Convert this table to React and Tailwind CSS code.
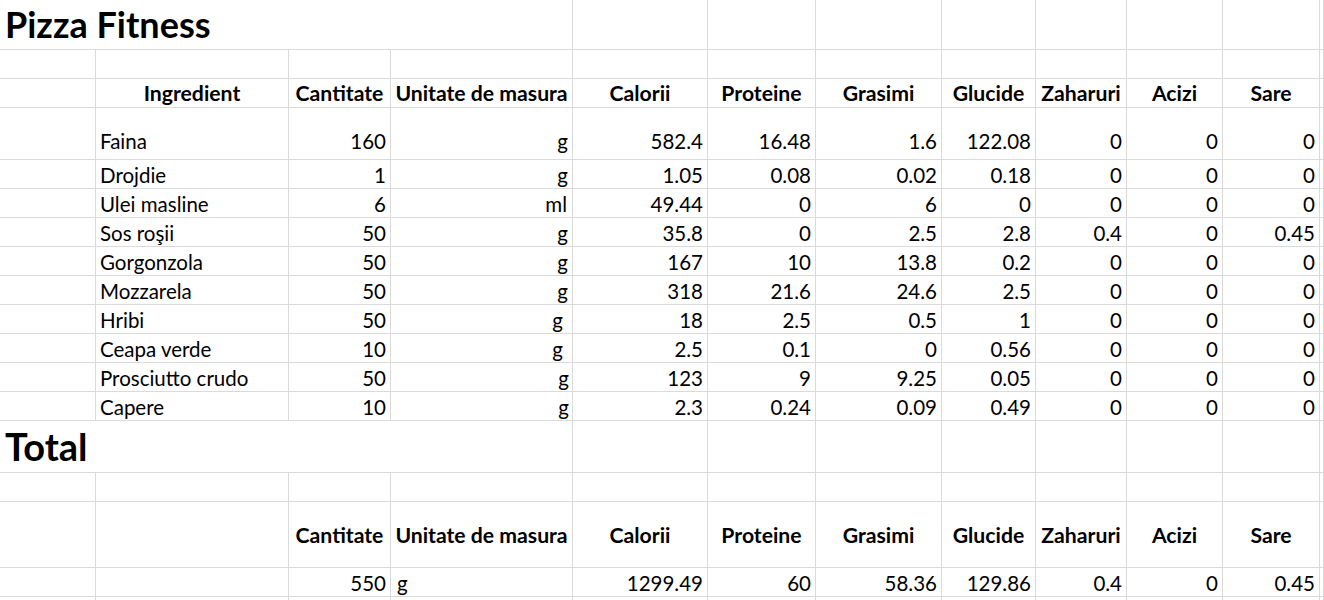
import React from "react";

const COLS = "grid-cols-[96px_193px_102px_182px_135px_108px_126px_94px_91px_96px_97px_1fr]";
const line = "border-[#dadada]";

function Cell({ children, className = "", span = "" }) {
  return (
    <div className={`border-r border-b ${line} flex items-end whitespace-nowrap overflow-visible ${span} ${className}`}>
      {children}
    </div>
  );
}

function Row({ h, children }) {
  return <div className={`grid ${COLS} ${h}`}>{children}</div>;
}

const headers = ["Calorii", "Proteine", "Grasimi", "Glucide", "Zaharuri", "Acizi", "Sare"];

const data = [
  ["Faina", "160", "g", "582.4", "16.48", "1.6", "122.08", "0", "0", "0", "pr-[4px]"],
  ["Drojdie", "1", "g", "1.05", "0.08", "0.02", "0.18", "0", "0", "0", "pr-[4px]"],
  ["Ulei masline", "6", "ml", "49.44", "0", "6", "0", "0", "0", "0", "pr-[4px]"],
  ["Sos roşii", "50", "g", "35.8", "0", "2.5", "2.8", "0.4", "0", "0.45", "pr-[4px]"],
  ["Gorgonzola", "50", "g", "167", "10", "13.8", "0.2", "0", "0", "0", "pr-[4px]"],
  ["Mozzarela", "50", "g", "318", "21.6", "24.6", "2.5", "0", "0", "0", "pr-[4px]"],
  ["Hribi", "50", "g", "18", "2.5", "0.5", "1", "0", "0", "0", "pr-[9px]"],
  ["Ceapa verde", "10", "g", "2.5", "0.1", "0", "0.56", "0", "0", "0", "pr-[9px]"],
  ["Prosciutto crudo", "50", "g", "123", "9", "9.25", "0.05", "0", "0", "0", "pr-[3px]"],
  ["Capere", "10", "g", "2.3", "0.24", "0.09", "0.49", "0", "0", "0", "pr-[3px]"],
];

function EmptyCells({ n, start = 0 }) {
  return Array.from({ length: n }).map((_, i) => <Cell key={start + i} />);
}

export default function App() {
  return (
    <div className="w-[1324px] h-[600px] overflow-hidden bg-white text-black font-['Lato',sans-serif] text-[20.5px] leading-none">
      {/* Title row */}
      <Row h="h-[50px]">
        <Cell span="col-span-4" className="pb-[7px] pl-[5px]">
          <span className="text-[36px] font-bold">Pizza Fitness</span>
        </Cell>
        <EmptyCells n={8} />
      </Row>
      {/* empty */}
      <Row h="h-[29px]">
        <EmptyCells n={12} />
      </Row>
      {/* header */}
      <Row h="h-[29px]">
        <Cell />
        <Cell className="justify-center pb-[3px] font-bold text-[21.2px]">Ingredient</Cell>
        <Cell className="justify-center pb-[3px] font-bold text-[21.2px]">Cantitate</Cell>
        <Cell className="justify-center pb-[3px] font-bold text-[21.2px]">Unitate de masura</Cell>
        {headers.map((h) => (
          <Cell key={h} className="justify-center pb-[3px] font-bold text-[21.2px]">{h}</Cell>
        ))}
        <Cell />
      </Row>
      {data.map((r, i) => (
        <Row key={r[0]} h={i === 0 ? "h-[52px]" : "h-[29px]"}>
          <Cell />
          <Cell className={`pl-[4px] ${i === 0 ? "pb-[8px]" : "pb-[3px]"}`}>{r[0]}</Cell>
          <Cell className={`justify-end pr-[4px] ${i === 0 ? "pb-[8px]" : "pb-[3px]"}`}>{r[1]}</Cell>
          <Cell className={`justify-end ${r[2] === "ml" ? "pr-[5px]" : r[10]} ${i === 0 ? "pb-[8px]" : "pb-[3px]"}`}>{r[2]}</Cell>
          {r.slice(3, 10).map((v, j) => (
            <Cell key={j} className={`justify-end pr-[4px] ${i === 0 ? "pb-[8px]" : "pb-[3px]"}`}>{v}</Cell>
          ))}
          <Cell />
        </Row>
      ))}
      {/* Total title */}
      <Row h="h-[52px]">
        <Cell span="col-span-4" className="pb-[7px] pl-[5px]">
          <span className="text-[38px] font-bold">Total</span>
        </Cell>
        <EmptyCells n={8} />
      </Row>
      <Row h="h-[29px]">
        <EmptyCells n={12} />
      </Row>
      <Row h="h-[66px]">
        <Cell />
        <Cell />
        <Cell className="justify-center pb-[21px] font-bold text-[21.2px]">Cantitate</Cell>
        <Cell className="justify-center pb-[21px] font-bold text-[21.2px]">Unitate de masura</Cell>
        {headers.map((h) => (
          <Cell key={h} className="justify-center pb-[21px] font-bold text-[21.2px]">{h}</Cell>
        ))}
        <Cell />
      </Row>
      <Row h="h-[29px]">
        <Cell />
        <Cell />
        <Cell className="justify-end pr-[4px] pb-[3px]">550</Cell>
        <Cell className="pl-[6px] pb-[3px]">g</Cell>
        {["1299.49", "60", "58.36", "129.86", "0.4", "0", "0.45"].map((v, j) => (
          <Cell key={j} className="justify-end pr-[4px] pb-[3px]">{v}</Cell>
        ))}
        <Cell />
      </Row>
      <Row h="h-[29px]">
        <EmptyCells n={12} />
      </Row>
    </div>
  );
}
